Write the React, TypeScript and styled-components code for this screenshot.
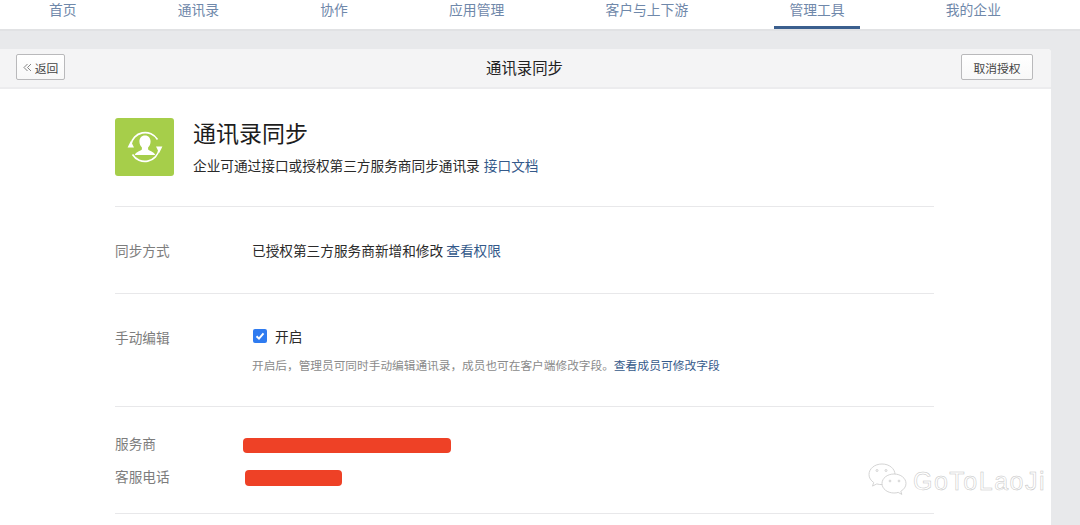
import React from "react";
import styled, { createGlobalStyle } from "styled-components";

const Global = createGlobalStyle`
  html, body { margin: 0; padding: 0; height: 525px; overflow: hidden; background: #e8e9eb; }
  body { font-family: "Noto Sans CJK SC", "Liberation Sans", sans-serif; }
  * { box-sizing: border-box; }
`;

const Page = styled.div`
  position: relative;
  width: 1080px;
  height: 525px;
  overflow: hidden;
`;

const Nav = styled.nav`
  display: flex;
  gap: 70.4px;
  height: 31px;
  padding-left: 33.6px;
  background: #fff;
  border-bottom: 2px solid #e1e2e4;
`;

const Tab = styled.a<{ $active?: boolean }>`
  height: 29px;
  padding: 0 15.4px;
  font-size: 13.8px;
  line-height: 19px;
  color: #6f88aa;
  white-space: nowrap;
  border-bottom: 3px solid ${(p) => (p.$active ? "#3b5f8e" : "transparent")};
`;

const Card = styled.main`
  width: 1051px;
  margin-top: 18px;
  background: #fff;
  border-radius: 0 4px 0 0;
  height: 476px;
`;

const CardHead = styled.header`
  display: grid;
  grid-template-columns: 1fr auto 1fr;
  align-items: center;
  height: 40px;
  padding: 0 18px 2px 16px;
  background: #f4f4f5;
  border-bottom: 2px solid #ececee;
  border-radius: 0 4px 0 0;
`;

const HeadTitle = styled.h1`
  margin: -1px 0 0;
  font-size: 15.4px;
  font-weight: 400;
  line-height: 20px;
  color: #222;
`;

const Btn = styled.button<{ $w: number; $end?: boolean }>`
  display: flex;
  align-items: center;
  justify-content: center;
  gap: 3px;
  justify-self: ${(p) => (p.$end ? "end" : "start")};
  width: ${(p) => p.$w}px;
  height: 26px;
  padding: 0;
  font-family: inherit;
  font-size: 11.8px;
  color: #444;
  background: linear-gradient(#fff, #f8f8f8);
  border: 1px solid #b9b9bb;
  border-radius: 2px;
`;

const Body = styled.section`
  width: 819px;
  margin-left: 115px;
`;

const Intro = styled.div`
  display: flex;
  gap: 19px;
  height: 118px;
  padding-top: 29px;
  border-bottom: 1px solid #e8e8ea;
`;

const IconBox = styled.div`
  display: flex;
  align-items: center;
  justify-content: center;
  width: 59px;
  height: 58px;
  background: #a6ce4a;
  border-radius: 3px;
`;

const Title = styled.h2`
  margin: -2px 0 0;
  font-size: 23px;
  font-weight: 400;
  line-height: 32px;
  color: #1d1d1d;
`;

const Sub = styled.p`
  margin: 7px 0 0;
  font-size: 13.67px;
  line-height: 20px;
  color: #2a2a2a;
  word-spacing: 1px;
`;

const Link = styled.a<{ $small?: boolean }>`
  color: #34598a;
  font-size: ${(p) => (p.$small ? "11.78px" : "inherit")};
`;

const Section = styled.div<{ $h: number; $top: number }>`
  display: flex;
  height: ${(p) => p.$h}px;
  padding-top: ${(p) => p.$top}px;
  border-bottom: 1px solid #e8e8ea;
`;

const Label = styled.div`
  flex: 0 0 137px;
  margin-top: -2px;
  font-size: 13.67px;
  line-height: 20px;
  color: #7d7d7d;
`;

const Value = styled.div`
  font-size: 13.67px;
  line-height: 20px;
  color: #2a2a2a;
`;

const PlainText = styled.div`
  margin-top: -2px;
`;

const CheckRow = styled.label`
  display: flex;
  align-items: center;
  gap: 8px;
  margin: -3px 0 0 1px;
  height: 20px;
`;

const Check = styled.span`
  display: flex;
  align-items: center;
  justify-content: center;
  width: 14px;
  height: 14px;
  background: #2f7bf0;
  border-radius: 2px;
`;

const Desc = styled.p`
  margin: 10px 0 0;
  font-size: 11.68px;
  line-height: 18px;
  color: #8a8a8a;
  white-space: nowrap;
`;

const InfoBlock = styled.div`
  height: 107px;
  padding-top: 28px;
  border-bottom: 1px solid #e8e8ea;
`;

const InfoRow = styled.div<{ $h: number }>`
  display: flex;
  align-items: center;
  height: ${(p) => p.$h}px;
`;

const InfoLabel = styled.div<{ $w: number }>`
  flex: 0 0 ${(p) => p.$w}px;
  margin-top: -4px;
  font-size: 13.67px;
  color: #7d7d7d;
`;

const Bar = styled.div<{ $w: number; $h: number }>`
  width: ${(p) => p.$w}px;
  height: ${(p) => p.$h}px;
  background: #ee4126;
  border-radius: 4px;
`;

const Watermark = styled.div`
  position: absolute;
  left: 868px;
  top: 461px;
  display: flex;
  align-items: center;
  gap: 5px;
`;

const MarkText = styled.span`
  font-family: "Liberation Sans", sans-serif;
  font-size: 25px;
  font-weight: 400;
  letter-spacing: 1.5px;
  line-height: 40px;
  color: #fff;
  -webkit-text-stroke: 0.5px #c4c4c4;
`;

const SyncIcon = () => (
  <svg width="38" height="38" viewBox="0 0 38 38" fill="none">
    <path d="M4.800 17A14.500 14.500 0 0 1 31.500 11.500" stroke="#fff" strokeWidth="1.600" />
    <path d="M33.200 21A14.500 14.500 0 0 1 6.500 26.500" stroke="#fff" strokeWidth="1.600" />
    <path d="M4.800 13L8 19.500H1.600z" fill="#fff" />
    <path d="M33.200 25L30 18.500H36.400z" fill="#fff" />
    <path
      d="M19 7.500c3.600 0 5.600 2.700 5.600 5.900 0 2.400-1.100 4.700-2.500 6v1.900c0 1.200 5.800 2.200 7.200 5.700H8.700c1.400-3.500 7.200-4.500 7.200-5.700v-1.900c-1.400-1.300-2.500-3.600-2.500-6 0-3.200 2-5.900 5.600-5.900z"
      fill="#fff"
    />
  </svg>
);

const WeChatMark = () => (
  <svg width="40" height="36" viewBox="0 0 40 36" fill="#fff" stroke="#c9c9c9" strokeWidth="0.800">
    <path d="M14 1C6.500 1 1 5.800 1 11.500c0 3.300 1.800 6 4.700 8l-1.200 3.600 4.300-2.200c1.600.5 3.300.7 5.200.7 8 0 13-5 13-10.100C27 5.800 21.500 1 14 1z" />
    <path d="M26 11c-6.800 0-12 4.300-12 9.500S19.200 30 26 30c1.500 0 2.900-.2 4.200-.6l3.600 2-1-3.100c3-1.800 5.200-4.500 5.200-7.800C38 15.300 32.800 11 26 11z" />
    <circle cx="9" cy="7.500" r="1" />
    <circle cx="18" cy="7.500" r="1" />
    <circle cx="22" cy="18" r="0.900" />
    <circle cx="31" cy="18" r="0.900" />
  </svg>
);

const tabs = ["首页", "通讯录", "协作", "应用管理", "客户与上下游", "管理工具", "我的企业"];

export default function App() {
  return (
    <Page>
      <Global />
      <Nav>
        {tabs.map((t) => (
          <Tab key={t} $active={t === "管理工具"}>
            {t}
          </Tab>
        ))}
      </Nav>
      <Card>
        <CardHead>
          <Btn $w={49}>
            <svg width="9" height="9" viewBox="0 0 9 9" fill="none" stroke="#777" strokeWidth="0.900">
              <path d="M4.500 1L1 4.500 4.500 8M8 1L4.500 4.500 8 8" />
            </svg>
            返回
          </Btn>
          <HeadTitle>通讯录同步</HeadTitle>
          <Btn $w={72} $end>
            取消授权
          </Btn>
        </CardHead>
        <Body>
          <Intro>
            <IconBox>
              <SyncIcon />
            </IconBox>
            <div>
              <Title>通讯录同步</Title>
              <Sub>
                企业可通过接口或授权第三方服务商同步通讯录 <Link>接口文档</Link>
              </Sub>
            </div>
          </Intro>
          <Section $h={87} $top={35}>
            <Label>同步方式</Label>
            <Value>
              <PlainText>
                已授权第三方服务商新增和修改 <Link>查看权限</Link>
              </PlainText>
            </Value>
          </Section>
          <Section $h={113} $top={35}>
            <Label>手动编辑</Label>
            <Value>
              <CheckRow>
                <Check>
                  <svg width="10" height="10" viewBox="0 0 10 10" fill="none" stroke="#fff" strokeWidth="2">
                    <path d="M1.500 5.200L4 7.600 8.500 2.400" />
                  </svg>
                </Check>
                开启
              </CheckRow>
              <Desc>
                开启后，管理员可同时手动编辑通讯录，成员也可在客户端修改字段。<Link $small>查看成员可修改字段</Link>
              </Desc>
            </Value>
          </Section>
          <InfoBlock>
            <InfoRow $h={20}>
              <InfoLabel $w={128}>服务商</InfoLabel>
              <Bar $w={208} $h={15} />
            </InfoRow>
            <InfoRow $h={46}>
              <InfoLabel $w={130}>客服电话</InfoLabel>
              <Bar $w={97} $h={16} />
            </InfoRow>
          </InfoBlock>
        </Body>
      </Card>
      <Watermark>
        <WeChatMark />
        <MarkText>GoToLaoJi</MarkText>
      </Watermark>
    </Page>
  );
}
